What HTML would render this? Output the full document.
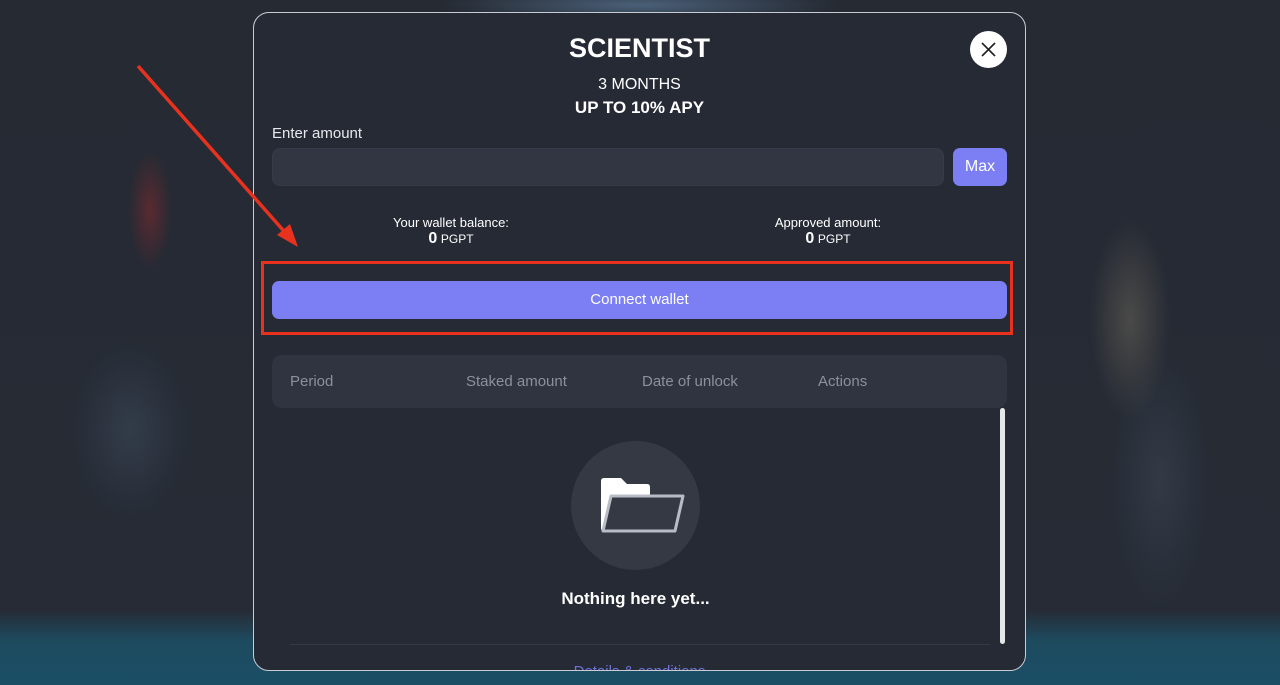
<!DOCTYPE html>
<html><head><meta charset="utf-8"><style>
*{box-sizing:border-box;margin:0;padding:0}
body{width:1280px;height:685px;overflow:hidden;position:relative;font-family:"Liberation Sans",sans-serif;background:#262b35}
.bg{position:absolute;inset:0;background:
radial-gradient(ellipse 22px 60px at 150px 210px,#5a2a30 0,transparent 100%),
radial-gradient(ellipse 40px 100px at 1130px 320px,#4a4a48 0,transparent 100%),
radial-gradient(ellipse 60px 90px at 130px 430px,#323c4a 0,transparent 100%),
radial-gradient(ellipse 50px 130px at 1160px 480px,#323a46 0,transparent 100%),
radial-gradient(ellipse 200px 20px at 640px 5px,#4a6078 0,transparent 100%),
linear-gradient(to bottom,#252a33 0,#262b35 610px,#1e4a5e 640px,#1a4f66 685px)}
.modal{position:absolute;left:253px;top:12px;width:773px;height:659px;background:#252a35;border:1px solid #c9ccd3;border-radius:16px;overflow:hidden}
.c{position:absolute;left:0;width:100%;text-align:center;color:#fff}
.close{position:absolute;left:716px;top:18px;width:37px;height:37px;border-radius:50%;background:#fff}
.in{position:absolute;left:18px;top:135px;width:672px;height:38px;background:#313642;border-radius:8px;border:1px solid #363b47}
.max{position:absolute;left:699px;top:135px;width:54px;height:38px;background:#7b7ff3;border-radius:7px;color:#fff;font-size:16px;text-align:center;line-height:38px}
.btn{position:absolute;left:18px;top:268px;width:735px;height:38px;background:#7b7ff3;border-radius:7px;color:#fff;font-size:15px;text-align:center;line-height:38px}
.th{position:absolute;left:18px;top:342px;width:735px;height:53px;background:#2f3440;border-radius:10px;color:#8c909a;font-size:15px}
.th span{position:absolute;top:18px}
.sb{position:absolute;left:746px;top:395px;width:5px;height:236px;background:#e6e7ea;border-radius:3px}
.circ{position:absolute;left:317px;top:428px;width:129px;height:129px;border-radius:50%;background:#343944}
</style></head><body>
<div class="bg"></div>
<div class="modal">
<div class="c" style="top:20px;font-size:27px;font-weight:bold">SCIENTIST</div>
<div class="c" style="top:63px;font-size:16px">3 MONTHS</div>
<div class="c" style="top:85px;font-size:17px;font-weight:bold">UP TO 10% APY</div>
<div class="close"><svg width="37" height="37"><path d="M12 12L25 25M25 12L12 25" stroke="#222" stroke-width="1.6"/></svg></div>
<div style="position:absolute;left:18px;top:112px;color:#e8e9ec;font-size:15px">Enter amount</div>
<div class="in"></div><div class="max">Max</div>
<div style="position:absolute;left:97px;top:202px;width:200px;text-align:center;color:#fff;font-size:13px">Your wallet balance:<br><span style="font-size:16px;font-weight:bold">0</span> <span style="font-size:12px">PGPT</span></div>
<div style="position:absolute;left:474px;top:202px;width:200px;text-align:center;color:#fff;font-size:13px">Approved amount:<br><span style="font-size:16px;font-weight:bold">0</span> <span style="font-size:12px">PGPT</span></div>
<div class="btn">Connect wallet</div>
<div class="th"><span style="left:18px">Period</span><span style="left:194px">Staked amount</span><span style="left:370px">Date of unlock</span><span style="left:546px">Actions</span></div>
<div class="sb"></div>
<div class="circ"><svg width="129" height="129"><path d="M30 40 Q30 37 33 37 L50 37 L56 43 L76 43 Q79 43 79 46 L79 55 L44 55 L37 90 L33 90 Q30 90 30 87 Z" fill="#fff"/><path d="M40 55 L112 55 L104 90 L32 90 Z" fill="#343944" stroke="#b8bcc6" stroke-width="3" stroke-linejoin="round"/></svg></div>
<div class="c" style="top:576px;font-size:17px;font-weight:bold;margin-left:-4px">Nothing here yet...</div>
<div style="position:absolute;left:36px;top:631px;width:700px;height:1px;background:#343944"></div>
<div class="c" style="top:650px;font-size:15px;color:#6f73d8">Details &amp; conditions</div>
</div>
<svg style="position:absolute;left:0;top:0" width="1280" height="685"><line x1="138" y1="66" x2="290" y2="238" stroke="#e8321e" stroke-width="3.5"/><polygon points="298,247 277,235 290,224" fill="#e8321e"/></svg>
<div style="position:absolute;left:261px;top:261px;width:752px;height:74px;border:3px solid #e8321e"></div>
</body></html>
